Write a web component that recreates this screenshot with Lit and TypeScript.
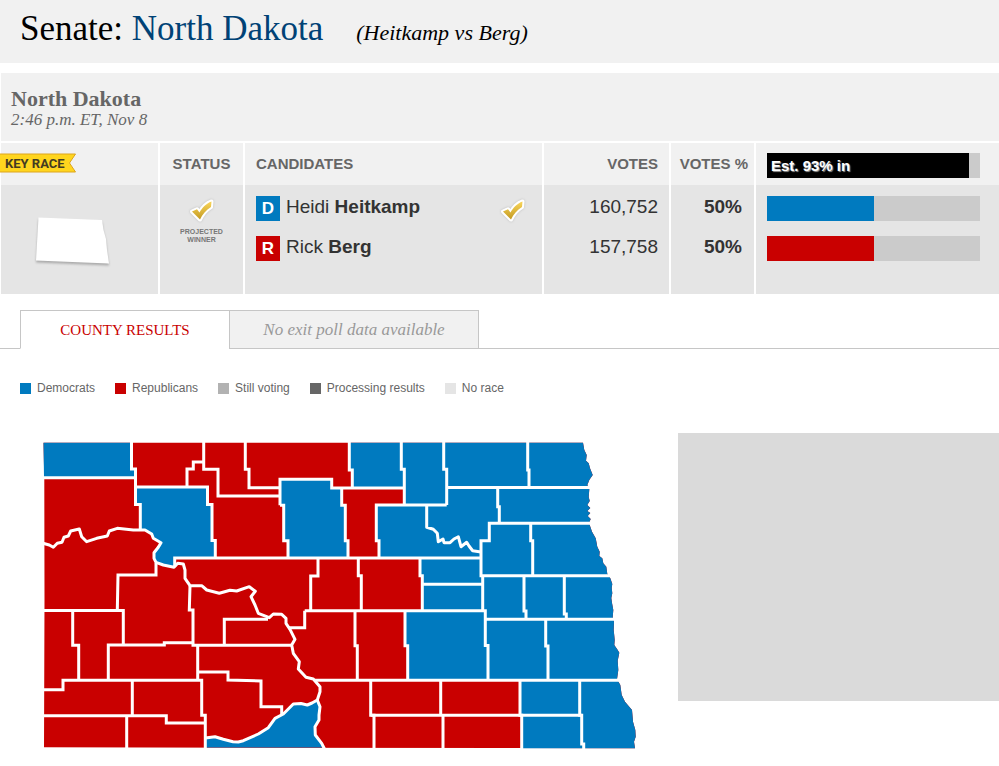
import { LitElement, html, svg, css } from "lit";
import { customElement, property } from "lit/decorators.js";

interface Candidate {
  party: "D" | "R";
  first: string;
  last: string;
  votes: string;
  percent: number;
  winner: boolean;
}

const candidates: Candidate[] = [
  { party: "D", first: "Heidi", last: "Heitkamp", votes: "160,752", percent: 50, winner: true },
  { party: "R", first: "Rick", last: "Berg", votes: "157,758", percent: 50, winner: false },
];

const legend = [
  { name: "Democrats", cls: "dem" },
  { name: "Republicans", cls: "rep" },
  { name: "Still voting", cls: "voting" },
  { name: "Processing results", cls: "processing" },
  { name: "No race", cls: "norace" },
];

// Eastern edge of the state, following the Red River from north to south.
const redRiver =
  "L583 442.7 584.3 450 586.7 455 586 460.7 588.7 463.3 590 468.3 592.7 475 589.3 480 587.3 485 589.3 489.3 588.7 497 589.7 501 587.3 505 590.3 508 587.3 511 590.3 513 587.7 516 590.7 519 589 523 592 531.7 595.7 538.3 597.3 546.7 599.7 551.7 599.3 556 602.3 558.3 603.3 563.3 606.3 566.7 607.3 574 610.3 578.3 612.3 584 611.7 588 612.3 593.3 611.3 598 612 603 613.3 610 612.7 617.3 614 621.7 613.7 630 614.7 640 614.3 645 617.7 650 619.3 652.7 617.7 660.7 618.3 670 617 679.3 620.3 685 621.7 695 625 701.7 632 710 633 721.7 635.3 730 635.7 736.7 634 741.7 635 748.3";

const stateOutline = `M43.5 442.7${redRiver}L44 747.3 44.5 600 44.3 480Z`;

const democratic = [
  "M43.5 442.7H131.5V469H135.5V477.7H44Z",
  "M135.5 487H207.5V504.5H212V540.5H215.3V558H174.7V567.3L163.3 565 156 562.3 154 558.3V552.7L158.3 547.3 161 542.7 153.3 538.3 151.7 534 145 530H140.3V504.5H135.5Z",
  "M280 479.3H331.7V488H341.7V505.3H345.3V540.7H348V558H288V540.7H283.7V505.3H280Z",
  `M349.3 442.7${redRiver}H521.7V715.3H520V680H407.7V645.7H405V610.7H422.3V575.7H420V558H379V540.7H376.3V505H404.3V488H352.3V470H349.3Z`,
  "M205.3 738L215 736.7 223.3 739.3 233 741.7 243.3 740.7 258.3 734 268.3 727.7 275 718.3 283.3 714 293.3 704 307.3 705 317.3 700 320 706.7 319 720 315 726.7 315.3 735 321.7 743.3 324 747.5H205.3Z",
];

const countyLines = [
  "M131.5 440V469H135.5V487 M42 477.7H135.5",
  "M135.5 487H207.5V504.5H212V540.5H215.3V558 M135.5 487V504.5H140.3V530",
  "M203.7 440V469.3H218V496H280 M203.7 462H193.3V469H187V487",
  "M245.3 440V469.3H249V487.7H280",
  "M280 505.3V479.3H331.7V488H404.3 M280 505.3H283.7V540.7H288V558",
  "M341.7 488V505.3H345.3V540.7H348V558",
  "M349.3 440V470H352.3V488",
  "M401.3 440V469.3H404.3V505",
  "M446.7 505H376.3V540.7H379V558",
  "M443.7 440V469.3H446.7V505 M446.7 487.5H594",
  "M527.7 440V470H529V487.3",
  "M497.7 487.3V506.7H499.3V523.3",
  "M594 523.3H489.3V540.7H481V575.7H612",
  "M530.7 523.3V540.7H532.7V575.7",
  "M174.7 567V558H481 M422.3 584.3H482.7",
  "M420 558V575.7H422.3V610.7",
  "M482.7 575.7V610.7 M524 575.7V611H526V619.3 M564.3 575.7V614H566.3V619.3",
  "M304.7 610.7H485.3V645.5H488V680 M485.3 619.3H618",
  "M545.7 619.3V646H548V680",
  "M315 680.3H624",
  "M520 680V715.3H521.7V750 M579.7 680V715.3H581.7V744H583.7V750",
  "M440.7 680V715.3H443V750 M370.7 715.3H581.7",
  "M370.7 680V715.3H374V750",
  "M318 558V576H310.7V610.7 M304.7 610.7V627.7H288.3",
  "M358.3 558V575.7H361.3V610.7",
  "M355 610.7V645.7H357.3V680",
  "M405 610.7V645.7H407.7V680",
  "M156 563V575H118L117.3 610.3",
  "M42 610.5H123.3V645 M72.7 610V645.3H78.7V680",
  "M108.3 680V645H164.3V642.7H193",
  "M190 586L189.3 610H193V645.3H291",
  "M224.3 645V619.3H268",
  "M197.7 645V680",
  "M42 689.7H63V680.3H201.7V715.3H205.3V750",
  "M132.3 680V715.7 M42 715.7H166.3V723H205.3 M126.7 716V750",
  "M197.7 672H228V680L261 681V706.7H281.7V715",
];

const rivers = [
  "M42 543L49.3 545 53.3 547.3 57.3 543.3 62 542.3 64 537.3 68.3 536 70.7 531 79.3 529 81.7 536.7 86.7 541.7 96.7 538.3 107.3 536 109.3 531 117.3 528.3 133.3 530 145 530 151.7 534 153.3 538.3 161 542.7 158.3 547.3 154 552.7 154 558.3 156 562.3 163.3 565 174 567.3 177.7 563.3 183.3 564 185 570 185 578.3 190 585.7 201.7 585.7 206.7 590 219.3 593.3 230 590.3 236.7 591 249.3 586.7 255.3 591.3 251 596.7 255 605 258.3 613.3 269.3 617.7 273.3 614 281.7 614.3 286 618.3 286 623.3 290 629.3 295 639.3 291.7 645 293.3 653.3 299.3 661.7 298.3 669 306 677.3 313.3 679 320 686.7 320 691.7 317.3 700 320 706.7 319 715 319 720 315 726.7 315.3 735 321.7 743.3 325 750",
  "M317.3 700L312 703 307.3 705 301 703.5 293.3 704 283.3 714 275 718.3 268.3 727.7 258.3 734 243.3 740.7 238.3 742 233 741.7 223.3 739.3 215 736.7 205.3 738",
  "M426.7 505V527.3L433.3 529.3 437.3 533.3 438.3 541.7 443 539 444 542.7 450 542.7 454 539 458.3 536.7 461 546.7 466.7 542.3 469 546 472.7 550.7 481 552",
];

@customElement("gold-check")
class GoldCheck extends LitElement {
  static styles = css`
    :host { display: block; width: 28px; height: 28px; }
    .mark { display: block; width: 100%; height: 100%; }
    .halo { fill: #fff; stroke: #fff; stroke-width: 4; stroke-linejoin: round; filter: drop-shadow(0 0 1px #bbb); }
  `;
  render() {
    const d = "M4 15.5L9 13.200 11.500 16.500C14 12 18 7.500 23.500 5.500L23 11C18 14 14.500 18.500 12 23.500Z";
    return html`<svg class="mark" viewBox="0 0 28 28" role="img" aria-label="Projected winner">
      <defs>
        <linearGradient id="gold" x1="0" y1="0" x2="0" y2="1">
          <stop offset="0" stop-color="#f9d55a" /><stop offset="1" stop-color="#c39a22" />
        </linearGradient>
      </defs>
      <path class="halo" d=${d} />
      <path d=${d} fill="url(#gold)" />
    </svg>`;
  }
}

@customElement("result-bar")
class ResultBar extends LitElement {
  @property({ type: Number }) value = 0;
  @property() tone = "";
  static styles = css`
    :host { display: block; height: 25px; background: #cbcbcb; }
    .fill { height: 100%; box-sizing: border-box; padding-left: 4px; white-space: nowrap; }
    .D { background: #007abf; }
    .R { background: #c90000; }
    .total { background: #000; }
  `;
  render() {
    return html`<div class="fill ${this.tone}" style="width:${this.value}%"><slot></slot></div>`;
  }
}

@customElement("county-map")
class CountyMap extends LitElement {
  static styles = css`
    :host { display: block; }
    .map { display: block; width: 100%; }
    .rep { fill: #c90000; }
    .dem { fill: #007abf; }
    .line { fill: none; stroke: #fff; stroke-width: 3; }
    .river { fill: none; stroke: #fff; stroke-width: 3; stroke-linejoin: round; }
  `;
  render() {
    return html`<svg class="map" viewBox="40 433 600 320" role="img" aria-label="County results in North Dakota">
      <path class="rep" d=${stateOutline} />
      ${democratic.map((d) => svg`<path class="dem" d=${d} />`)}
      ${countyLines.map((d) => svg`<path class="line" d=${d} />`)}
      ${rivers.map((d) => svg`<path class="river" d=${d} />`)}
    </svg>`;
  }
}

@customElement("app-root")
class AppRoot extends LitElement {
  static styles = css`
    :host {
      display: block;
      background: #fff;
      color: #333;
      font-family: "Liberation Sans", Arial, sans-serif;
    }
    .title-bar {
      display: flex;
      align-items: baseline;
      gap: 33px;
      height: 63px;
      box-sizing: border-box;
      padding: 9px 20px 0;
      background: #f1f1f1;
      color: #000;
      font-family: "Liberation Serif", serif;
    }
    .title { margin: 0; font-size: 35px; line-height: 40px; font-weight: 400; }
    .state { color: #004276; }
    .matchup { margin: 0; font-size: 22px; font-style: italic; }
    .race { margin: 10px 0 0 1px; }
    .race-head {
      height: 68px;
      box-sizing: border-box;
      padding: 15px 10px 0;
      background: #f1f1f1;
      color: #666;
      font-family: "Liberation Serif", serif;
    }
    .race-name { margin: 0; font-size: 22px; line-height: 22px; }
    .time { margin: 0; font-size: 17px; line-height: 20px; font-style: italic; }
    .results {
      width: 100%;
      margin-top: 2px;
      table-layout: fixed;
      border-collapse: separate;
      border-spacing: 0;
    }
    .c-map { width: 157px; }
    .c-status { width: 85px; }
    .c-names { width: 299px; }
    .c-votes { width: 127px; }
    .c-percent { width: 85px; }
    th, td { padding: 0; text-align: left; vertical-align: top; border-left: 2px solid #fff; }
    th:first-child, .state-cell { border-left: 0; }
    th { height: 42px; background: #f1f1f1; color: #666; font-size: 15px; line-height: 42px; }
    td { background: #e5e5e5; font-size: 19px; line-height: 22px; padding-top: 11px; }
    .last td { padding-top: 15px; padding-bottom: 33px; }
    .state-cell, .status-cell { text-align: center; }
    th.center { text-align: center; }
    th.names, td.names { padding-left: 11px; }
    th.votes, td.votes { text-align: right; padding-right: 11px; }
    th.percent { text-align: right; padding-right: 6px; }
    td.percent { text-align: right; padding-right: 12px; font-weight: 700; }
    th.bar, td.bar { padding-left: 11px; padding-right: 19px; }
    th.bar { padding-top: 10px; height: 32px; line-height: 25px; color: #fff; text-shadow: 1px 1px 1px #999; }
    .ribbon { display: block; width: 78px; height: 22px; margin: 9px 0 0 -1px; }
    .ribbon-text { font: 700 13px "Liberation Sans Narrow", "Roboto", sans-serif; fill: #443c22; }
    .mini { display: block; width: 80px; height: 54px; margin: 18px auto 0 32px; }
    .mini-shape { fill: #fff; filter: drop-shadow(0 2px 1px #aaa); }
    .status-check { margin: 0 auto; }
    .projected { margin: 4px 0 0; font-size: 7px; line-height: 8px; font-weight: 700; color: #777; }
    .candidate { display: flex; height: 25px; }
    .party {
      width: 24px;
      height: 25px;
      margin-right: 6px;
      color: #fff;
      font-size: 17px;
      line-height: 25px;
      font-weight: 700;
      text-align: center;
    }
    .D, .dem { background: #007abf; }
    .R, .rep { background: #c90000; }
    .won { margin: 0 15px 0 auto; }
    .tabs {
      display: flex;
      height: 39px;
      margin-top: 16px;
      padding-left: 20px;
      box-shadow: inset 0 -1px #c6c6c6;
    }
    .tab {
      box-sizing: border-box;
      width: 210px;
      padding: 0;
      border: 1px solid #c6c6c6;
      border-bottom-color: #fff;
      background: #fff;
      color: #c90000;
      font: 15px/36px "Liberation Serif", serif;
    }
    .tab:disabled {
      width: 250px;
      margin-left: -1px;
      border-bottom-color: #c6c6c6;
      background: #f1f1f1;
      color: #999;
      font-size: 17px;
      font-style: italic;
    }
    .legend {
      display: flex;
      gap: 20px;
      margin: 32px 0 0;
      padding: 0 20px;
      list-style: none;
      color: #666;
      font-size: 12px;
      line-height: 14px;
    }
    .key { display: flex; align-items: center; gap: 6px; }
    .swatch { width: 11px; height: 11px; }
    .voting { background: #b2b2b2; }
    .processing { background: #666; }
    .norace { background: #e5e5e5; }
    .county { display: flex; align-items: flex-start; gap: 38px; margin-top: 38px; padding: 0 0 13px 40px; }
    .county-map { flex: 0 1 600px; }
    .detail { flex: 1 1 0; height: 268px; background: #dadada; }
  `;

  render() {
    return html`
      <header class="title-bar">
        <h1 class="title">Senate: <span class="state">North Dakota</span></h1>
        <p class="matchup">(Heitkamp vs Berg)</p>
      </header>
      <main>
        <section class="race">
          <div class="race-head">
            <h2 class="race-name">North Dakota</h2>
            <p class="time">2:46 p.m. ET, Nov 8</p>
          </div>
          <table class="results">
            <colgroup>
              <col class="c-map" /><col class="c-status" /><col class="c-names" />
              <col class="c-votes" /><col class="c-percent" /><col />
            </colgroup>
            <thead>
              <tr>
                <th scope="col">
                  <svg class="ribbon" viewBox="0 0 78 22">
                    <path d="M-2 2H75.500L69.500 11 75.500 20H-2Z" fill="#ffd51e" stroke="#dda51c" />
                    <text class="ribbon-text" x="5" y="16">KEY RACE</text>
                  </svg>
                </th>
                <th class="center" scope="col">STATUS</th>
                <th class="names" scope="col">CANDIDATES</th>
                <th class="votes" scope="col">VOTES</th>
                <th class="percent" scope="col">VOTES %</th>
                <th class="bar" scope="col"><result-bar tone="total" value="95">Est. 93% in</result-bar></th>
              </tr>
            </thead>
            <tbody>
              ${candidates.map(
                (c, i) => html`<tr class=${i === candidates.length - 1 ? "last" : ""}>
                  ${i === 0
                    ? html`<td class="state-cell" rowspan="2">
                          <svg class="mini" viewBox="0 0 80 54" role="img" aria-label="North Dakota">
                            <path class="mini-shape" d="M5.500 3.500L69 6 70.500 16 73 25 74 36 76 49.500 3 46.500Z" />
                          </svg>
                        </td>
                        <td class="status-cell" rowspan="2">
                          <gold-check class="status-check"></gold-check>
                          <p class="projected">PROJECTED<br />WINNER</p>
                        </td>`
                    : ""}
                  <td class="names">
                    <div class="candidate">
                      <span class="party ${c.party}">${c.party}</span>
                      <span>${c.first} <b>${c.last}</b></span>
                      ${c.winner ? html`<gold-check class="won"></gold-check>` : ""}
                    </div>
                  </td>
                  <td class="votes">${c.votes}</td>
                  <td class="percent">${c.percent}%</td>
                  <td class="bar"><result-bar tone=${c.party} .value=${c.percent}></result-bar></td>
                </tr>`
              )}
            </tbody>
          </table>
        </section>
        <div class="tabs" role="tablist">
          <button class="tab" role="tab" aria-selected="true">COUNTY RESULTS</button>
          <button class="tab" role="tab" disabled>No exit poll data available</button>
        </div>
        <ul class="legend">
          ${legend.map((l) => html`<li class="key"><span class="swatch ${l.cls}"></span>${l.name}</li>`)}
        </ul>
        <section class="county">
          <county-map class="county-map"></county-map>
          <aside class="detail"></aside>
        </section>
      </main>
    `;
  }
}
